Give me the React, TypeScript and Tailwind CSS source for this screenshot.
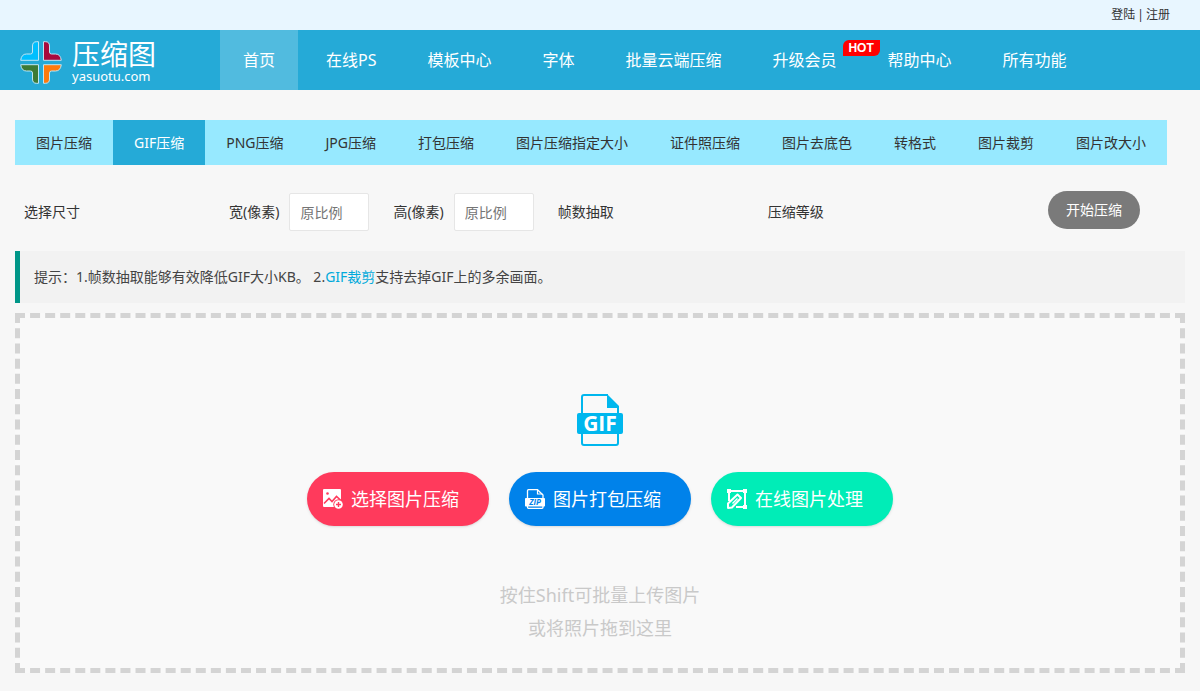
import React, { useState } from 'react';

const navItems = ['首页', '在线PS', '模板中心', '字体', '批量云端压缩', '升级会员', '帮助中心', '所有功能'];

const tabs = [
  '图片压缩',
  'GIF压缩',
  'PNG压缩',
  'JPG压缩',
  '打包压缩',
  '图片压缩指定大小',
  '证件照压缩',
  '图片去底色',
  '转格式',
  '图片裁剪',
  '图片改大小',
];

function LogoMark() {
  const arm = 'M18.500 .7H16.500Q12.500 .7 12.500 5V11Q12.500 13 10.500 13H6.500Q1.500 13 .7 19.300H18.500Z';
  return (
    <svg width="42" height="43" viewBox="0 0 42 43" stroke="#bfe6f5" strokeWidth="1" strokeLinejoin="round">
      <path d={arm} fill="#00bfff" />
      <path d={arm} fill="#a80a3c" transform="translate(42 0) scale(-1 1)" />
      <path d={arm} fill="#3d7a35" transform="translate(0 43) scale(1 -1)" />
      <path d={arm} fill="#ff7a0c" transform="translate(42 43) scale(-1 -1)" />
    </svg>
  );
}

function GifIcon() {
  return (
    <svg width="46" height="52" viewBox="0 0 46 52" role="img" aria-label="GIF">
      <path
        d="M31 1H7Q5 1 5 3V49Q5 51 7 51H39Q41 51 41 49V13"
        fill="none"
        stroke="#00b7ee"
        strokeWidth="2"
      />
      <path d="M30 0L42 12V14H30Z" fill="#00b7ee" />
      <rect x="0" y="19" width="46" height="21" rx="2" fill="#00b7ee" />
      <text
        x="23"
        y="37"
        textAnchor="middle"
        fill="#fff"
        fontFamily="Open Sans, sans-serif"
        fontSize="21"
        fontWeight="700"
      >
        GIF
      </text>
    </svg>
  );
}

function PictureAddIcon() {
  return (
    <svg width="20" height="20" viewBox="0 0 20 20">
      <rect x="0" y="0" width="18" height="18" rx="1" fill="#fff" />
      <circle cx="4.500" cy="4.500" r="1.3" fill="#ff3a5c" />
      <path d="M1 14.500L6 9.500L9 12.500L13.500 7.500L18 11.500" fill="none" stroke="#ff3a5c" strokeWidth="1.600" />
      <circle cx="15.500" cy="15.500" r="5.200" fill="#ff3a5c" />
      <circle cx="15.500" cy="15.500" r="4.300" fill="#fff" />
      <path d="M15.500 13V18M13 15.500H18" stroke="#ff3a5c" strokeWidth="1.400" />
    </svg>
  );
}

function ZipIcon() {
  return (
    <svg width="20" height="20" viewBox="0 0 20 20">
      <path d="M12.500 .7H3.500Q2.500 .7 2.500 1.700V18.300Q2.500 19.300 3.500 19.300H17Q18 19.300 18 18.300V6Z" fill="none" stroke="#fff" strokeWidth="1.3" />
      <path d="M12.500 .7V5H17.500" fill="none" stroke="#fff" strokeWidth="1.2" />
      <rect x="0" y="9" width="20" height="8.500" rx=".8" fill="#fff" />
      <text
        x="10"
        y="16"
        textAnchor="middle"
        fill="#0082ea"
        fontFamily="Open Sans, sans-serif"
        fontSize="8"
        fontWeight="700"
        fontStyle="italic"
      >
        ZIP
      </text>
    </svg>
  );
}

function EditIcon() {
  return (
    <svg width="20" height="20" viewBox="0 0 20 20" fill="none" stroke="#fff">
      <path d="M2 12V2H18V18H9" strokeWidth="2" />
      <path d="M0 0H4V4H0ZM16 0H20V4H16ZM16 16H20V20H16Z" fill="#fff" stroke="none" />
      <path d="M1 19V14.500L10.500 5.500L14 9L5 18.500Z" strokeWidth="2" strokeLinejoin="round" />
      <path d="M5.500 14.500L10.500 9.500" strokeWidth="1.500" />
    </svg>
  );
}

const actions = [
  { label: '选择图片压缩', icon: <PictureAddIcon />, color: 'bg-[#ff3a5c]' },
  { label: '图片打包压缩', icon: <ZipIcon />, color: 'bg-[#0082ea]' },
  { label: '在线图片处理', icon: <EditIcon />, color: 'bg-[#00edb7]' },
];

function SizeInput({ id, label }: { id: string; label: string }) {
  const [value, setValue] = useState('');
  return (
    <div className="flex items-center gap-2.5 mr-6">
      <label htmlFor={id}>{label}</label>
      <input
        id={id}
        type="text"
        value={value}
        placeholder="原比例"
        onChange={(e) => setValue(e.target.value)}
        className="w-20 h-[38px] px-2.5 bg-white border border-[#e6e6e6] rounded-xs placeholder:text-[#757575] outline-none"
      />
    </div>
  );
}

export default function App() {
  const [activeTab, setActiveTab] = useState('GIF压缩');

  return (
    <div className="min-h-screen bg-[#f7f7f7] text-sm text-[#333] font-['Noto_Sans','Noto_Sans_CJK_SC',sans-serif]">
      {/* Top bar */}
      <div className="h-[30px] px-[30px] flex items-center justify-end gap-0.5 bg-[#e8f6ff] text-xs">
        <a href="#login">登陆</a>
        <span>|</span>
        <a href="#register">注册</a>
      </div>

      {/* Header */}
      <header className="h-[60px] flex bg-[#25aad7] text-white">
        <a href="#home" className="w-[220px] shrink-0 pl-5 pt-1 flex items-center gap-2.5">
          <LogoMark />
          <span className="flex flex-col">
            <span className="text-[28px] leading-7">压缩图</span>
            <span className="text-[13px] leading-4">yasuotu.com</span>
          </span>
        </a>
        <nav className="flex gap-[5px] text-base whitespace-nowrap">
          {navItems.map((item, i) => (
            <a
              key={item}
              href={`#nav-${i}`}
              className={`relative px-[23px] flex items-center ${i === 0 ? 'bg-[#51bbdf]' : 'hover:bg-[#51bbdf]'}`}
            >
              {item}
              {item === '升级会员' && (
                <span className="absolute top-2.5 -right-5 w-[37px] h-4 rounded-tl-md rounded-br-md bg-[#f00] font-['Liberation_Sans',sans-serif] text-xs leading-4 font-bold text-center">
                  HOT
                </span>
              )}
            </a>
          ))}
        </nav>
      </header>

      <main className="px-[15px] pt-[30px] pb-[18px]">
        {/* Tool tabs */}
        <nav className="w-fit flex bg-[#97e9ff] whitespace-nowrap">
          {tabs.map((tab) => (
            <button
              key={tab}
              type="button"
              onClick={() => setActiveTab(tab)}
              className={`h-[45px] px-[21px] cursor-pointer ${tab === activeTab ? 'bg-[#25aad7] text-white' : ''}`}
            >
              {tab}
            </button>
          ))}
        </nav>

        {/* Options */}
        <form
          className="pt-[26px] pl-[9px] pr-[45px] flex items-start justify-between whitespace-nowrap"
          onSubmit={(e) => e.preventDefault()}
        >
          <div className="pt-0.5 flex items-center">
            <span className="w-[205px]">选择尺寸</span>
            <SizeInput id="width" label="宽(像素)" />
            <SizeInput id="height" label="高(像素)" />
            <span className="w-[210px]">帧数抽取</span>
            <span>压缩等级</span>
          </div>
          <button type="submit" className="h-[38px] px-[18px] rounded-full bg-[#7a7a7a] text-white cursor-pointer">
            开始压缩
          </button>
        </form>

        {/* Tip */}
        <p className="mt-5 h-[52px] pl-3.5 flex items-center border-l-5 border-[#009688] bg-[#f2f2f2] text-[#444]">
          <span>
            提示：1.帧数抽取能够有效降低GIF大小KB。 2.
            <a href="#gif-crop" className="text-[#01aadb]">GIF裁剪</a>
            支持去掉GIF上的多余画面。
          </span>
        </p>

        {/* Drop zone */}
        <section className="mt-2.5 pt-[76px] pb-[23px] flex flex-col items-center border-5 border-dashed border-[#d4d4d4] bg-[#f9f9f9]">
          <GifIcon />
          <div className="mt-[26px] flex gap-5">
            {actions.map(({ label, icon, color }) => (
              <button
                key={label}
                type="button"
                className={`w-[182px] h-[54px] pl-4 flex items-center gap-2 rounded-full text-lg text-white shadow-sm cursor-pointer ${color}`}
              >
                {icon}
                {label}
              </button>
            ))}
          </div>
          <p className="mt-[53px] text-center text-lg leading-[33px] text-[#c9c9c9]">
            按住Shift可批量上传图片
            <br />
            或将照片拖到这里
          </p>
        </section>
      </main>
    </div>
  );
}
